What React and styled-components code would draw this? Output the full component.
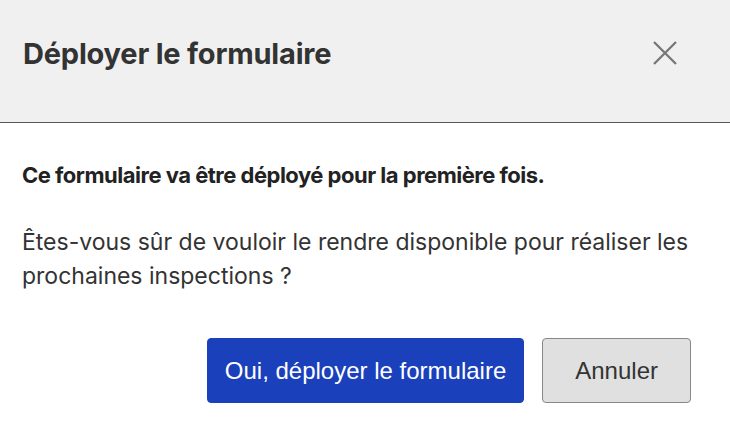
import React from 'react'
import styled, { createGlobalStyle } from 'styled-components'

const GlobalStyle = createGlobalStyle`
  html, body { margin: 0; padding: 0; background: #ffffff; }
  body { font-family: Inter, "Noto Sans", sans-serif; }
`

function CloseGlyph() {
  return (
    <svg width="24" height="24" viewBox="0 0 24 24" fill="none">
      <path d="M1 1 L23 23 M23 1 L1 23" stroke="#777777" strokeWidth="2.3" />
    </svg>
  )
}

export default function App() {
  return (
    <>
      <GlobalStyle />
      <Dialog>
        <Header>
          <Title>Déployer le formulaire</Title>
          <CloseButton aria-label="Fermer"><CloseGlyph /></CloseButton>
        </Header>
        <Body>
          <Lead>Ce formulaire va être déployé pour la première fois.</Lead>
          <Question>
            Êtes-vous sûr de vouloir le rendre disponible pour réaliser les prochaines inspections ?
          </Question>
        </Body>
        <Footer>
          <Button primary>Oui, déployer le formulaire</Button>
          <Button>Annuler</Button>
        </Footer>
      </Dialog>
    </>
  )
}

const Dialog = styled.div`
  width: 730px;
  height: 436px;
  display: flex;
  flex-direction: column;
`

const Header = styled.div`
  height: 123px;
  background-color: #f0f0f0;
  border-bottom: 1px solid #555555;
  display: flex;
  align-items: flex-start;
  justify-content: space-between;
  padding: 36px 53px 0 23px;
  box-sizing: border-box;
`

const Title = styled.h2`
  margin: 0;
  font-size: 29px;
  line-height: 35px;
  font-weight: 700;
  color: #333333;
  letter-spacing: -0.2px;
`

const CloseButton = styled.button`
  border: none;
  background: none;
  padding: 0;
  margin-top: 5px;
  display: flex;
  cursor: pointer;
`

const Body = styled.div`
  padding: 39px 22px 0 22px;
`

const Lead = styled.p`
  margin: 0 0 36px 0;
  font-size: 22px;
  line-height: 27px;
  font-weight: 700;
  color: #222222;
  letter-spacing: -0.5px;
`

const Question = styled.p`
  margin: 0;
  font-size: 23px;
  line-height: 34px;
  color: #333333;
  max-width: 690px;
`

const Footer = styled.div`
  display: flex;
  justify-content: flex-end;
  gap: 18px;
  padding: 45px 39px 0 0;
`

const Button = styled.button`
  height: 65px;
  padding: 0 ${p => (p.primary ? '17px' : '32px')};
  border-radius: 4px;
  font-family: "Liberation Sans", Arial, sans-serif;
  font-size: 24px;
  cursor: pointer;
  background-color: ${p => (p.primary ? '#1b40bb' : '#e0e0e0')};
  color: ${p => (p.primary ? '#ffffff' : '#333333')};
  border: 1px solid ${p => (p.primary ? '#1b40bb' : '#888888')};
`
